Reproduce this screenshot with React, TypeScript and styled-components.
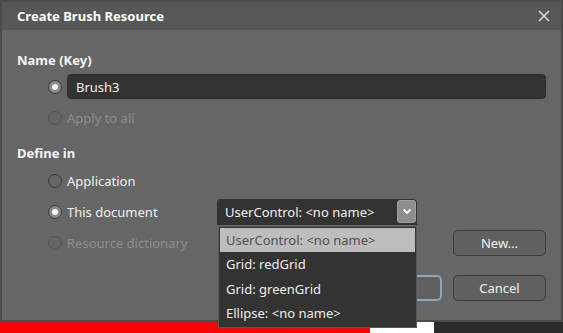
import React, { useState } from 'react';
import styled, { createGlobalStyle } from 'styled-components';

const GlobalStyle = createGlobalStyle`
  html, body {
    margin: 0;
    padding: 0;
    background: #2b2b2b;
    overflow: hidden;
  }
  body {
    font-family: "Noto Sans", "Open Sans", sans-serif;
    font-size: 13px;
  }
`;

const Page = styled.div`
  width: 563px;
  height: 333px;
  display: flex;
  flex-direction: column;
`;

const Dialog = styled.div`
  box-sizing: border-box;
  width: 563px;
  height: 322px;
  border: 2px solid #4b4b4b;
  background: #666666;
  display: flex;
  flex-direction: column;
  position: relative;
`;

const TitleBar = styled.div`
  height: 28px;
  background: #575757;
  display: flex;
  align-items: center;
  justify-content: space-between;
  padding: 0 10px 0 15px;
`;

const Title = styled.div`
  color: #ffffff;
  font-weight: 700;
  font-size: 13px;
`;

const CloseButton = styled.div`
  width: 14px;
  height: 14px;
  display: flex;
  align-items: center;
  justify-content: center;
`;

const Body = styled.div`
  flex: 1;
  padding: 21px 15px 0 15px;
  display: flex;
  flex-direction: column;
`;

const SectionLabel = styled.div`
  color: #f4f4f4;
  font-weight: 700;
  font-size: 13px;
  height: 18px;
  line-height: 18px;
`;

const RadioRow = styled.div<{ $h?: number }>`
  display: flex;
  align-items: center;
  height: ${(p) => p.$h ?? 25}px;
  padding-left: 31px;
  gap: 5px;
`;

const RadioCircle = styled.span<{ $checked?: boolean; $disabled?: boolean }>`
  box-sizing: border-box;
  width: 14px;
  height: 14px;
  border-radius: 50%;
  flex-shrink: 0;
  border: 1.5px solid ${(p) => (p.$disabled ? '#545454' : '#3a3a3a')};
  background: ${(p) => (p.$checked ? '#8a8a8a' : 'transparent')};
  display: flex;
  align-items: center;
  justify-content: center;
  &::after {
    content: '';
    width: 6px;
    height: 6px;
    border-radius: 50%;
    background: #f4f4f4;
    display: ${(p) => (p.$checked ? 'block' : 'none')};
  }
`;

const RadioText = styled.span<{ $disabled?: boolean }>`
  color: ${(p) => (p.$disabled ? '#8d8d8d' : '#f0f0f0')};
  white-space: nowrap;
`;

const TextInput = styled.input`
  flex: 1;
  box-sizing: border-box;
  height: 25px;
  background: #333333;
  border: 1px solid #2e2e2e;
  border-radius: 4px;
  color: #f0f0f0;
  font-family: inherit;
  font-size: 13px;
  padding: 0 8px;
  outline: none;
`;

const DefineGrid = styled.div`
  display: grid;
  grid-template-columns: 200px 200px 1fr;
  grid-auto-rows: 31px;
  align-items: center;
  margin-top: 3px;
`;

const ComboWrap = styled.div`
  position: relative;
  width: 200px;
  height: 26px;
`;

const Combo = styled.div`
  box-sizing: border-box;
  height: 26px;
  background: #333333;
  border-radius: 4px 4px 0 0;
  display: flex;
  align-items: center;
  justify-content: space-between;
  padding: 0 1px 0 8px;
  color: #f0f0f0;
  white-space: nowrap;
`;

const ComboButton = styled.span`
  box-sizing: border-box;
  width: 19px;
  height: 23px;
  background: #8e8e8e;
  border: 1px solid #a0a0a0;
  border-radius: 3px;
  display: flex;
  align-items: center;
  justify-content: center;
`;

const ListBox = styled.div`
  position: absolute;
  left: 1px;
  top: 27px;
  width: 199px;
  box-sizing: border-box;
  background: #333333;
  border: 1px solid #585858;
  padding: 1px;
  z-index: 5;
`;

const ListItem = styled.div<{ $selected?: boolean }>`
  height: 24.5px;
  display: flex;
  align-items: center;
  padding-left: 6px;
  white-space: nowrap;
  background: ${(p) => (p.$selected ? '#bdbdbd' : 'transparent')};
  color: ${(p) => (p.$selected ? '#505050' : '#eeeeee')};
`;

const Button = styled.button<{ $focused?: boolean }>`
  box-sizing: border-box;
  width: 93px;
  height: 26px;
  background: #606060;
  border: ${(p) => (p.$focused ? '2px solid #8ea4ba' : '1px solid #3c3c3c')};
  border-radius: 5px;
  color: #f0f0f0;
  font-family: inherit;
  font-size: 13px;
  padding: 0;
`;

const NewCell = styled.div`
  display: flex;
  justify-content: flex-end;
`;

const Footer = styled.div`
  display: flex;
  justify-content: flex-end;
  gap: 11px;
  margin-top: 17px;
`;

const Strip = styled.div`
  flex: 1;
  display: flex;
`;

const StripPart = styled.div<{ $color: string; $w?: number }>`
  background: ${(p) => p.$color};
  width: ${(p) => (p.$w ? `${p.$w}px` : 'auto')};
  flex: ${(p) => (p.$w ? '0 0 auto' : '1')};
`;

const items = ['UserControl: <no name>', 'Grid: redGrid', 'Grid: greenGrid', 'Ellipse: <no name>'];

export default function App() {
  const [name, setName] = useState('Brush3');
  return (
    <Page>
      <GlobalStyle />
      <Dialog>
        <TitleBar>
          <Title>Create Brush Resource</Title>
          <CloseButton>
            <svg width="12" height="12" viewBox="0 0 12 12">
              <path d="M1 1 L11 11 M11 1 L1 11" stroke="#d8d8d8" strokeWidth="1.6" />
            </svg>
          </CloseButton>
        </TitleBar>
        <Body>
          <SectionLabel>Name (Key)</SectionLabel>
          <RadioRow style={{ marginTop: 5 }}>
            <RadioCircle $checked />
            <TextInput value={name} onChange={(e) => setName(e.target.value)} />
          </RadioRow>
          <RadioRow style={{ marginTop: 6 }}>
            <RadioCircle $disabled />
            <RadioText $disabled>Apply to all</RadioText>
          </RadioRow>
          <SectionLabel style={{ marginTop: 14 }}>Define in</SectionLabel>
          <DefineGrid>
            <RadioRow $h={31}>
              <RadioCircle />
              <RadioText>Application</RadioText>
            </RadioRow>
            <div />
            <div />
            <RadioRow $h={31}>
              <RadioCircle $checked />
              <RadioText>This document</RadioText>
            </RadioRow>
            <ComboWrap>
              <Combo>
                <span>UserControl: &lt;no name&gt;</span>
                <ComboButton>
                  <svg width="10" height="7" viewBox="0 0 10 7">
                    <path d="M1.5 1.5 L5 5 L8.5 1.5" stroke="#ffffff" strokeWidth="1.8" fill="none" />
                  </svg>
                </ComboButton>
              </Combo>
              <ListBox>
                {items.map((it, i) => (
                  <ListItem key={it} $selected={i === 0}>
                    {it}
                  </ListItem>
                ))}
              </ListBox>
            </ComboWrap>
            <div />
            <RadioRow $h={31}>
              <RadioCircle $disabled />
              <RadioText $disabled>Resource dictionary</RadioText>
            </RadioRow>
            <div />
            <NewCell>
              <Button>New...</Button>
            </NewCell>
          </DefineGrid>
          <Footer>
            <Button $focused>OK</Button>
            <Button>Cancel</Button>
          </Footer>
        </Body>
      </Dialog>
      <Strip>
        <StripPart $color="#ff0000" $w={370} />
        <StripPart $color="#ffffff" $w={64} />
        <StripPart $color="#2b2b2b" />
      </Strip>
    </Page>
  );
}
